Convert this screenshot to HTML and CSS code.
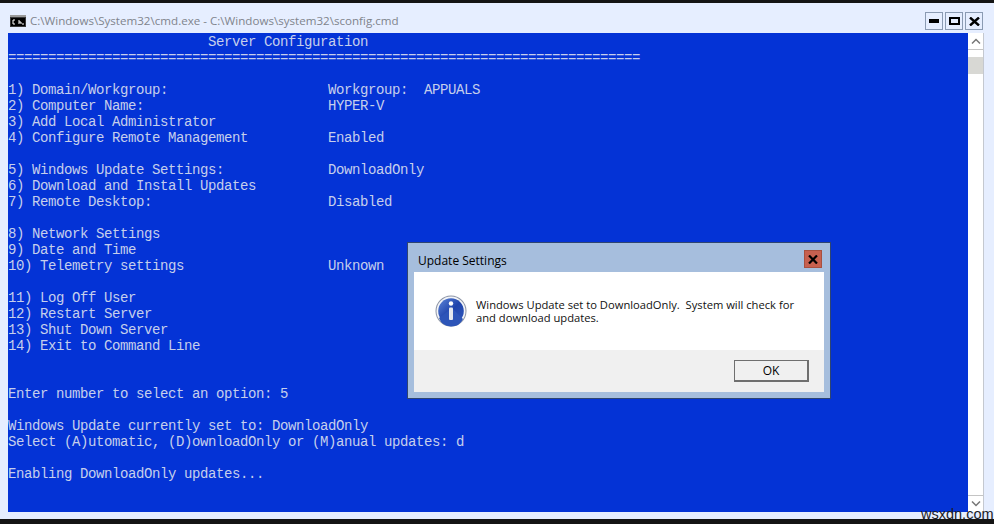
FILE: index.html
```html
<!DOCTYPE html>
<html lang="en">
<head>
<meta charset="utf-8">
<title>cmd.exe - sconfig</title>
<link rel="stylesheet" href="styles.css">
</head>
<body>
<div class="window">
  <header class="titlebar">
    <svg class="app-icon" width="16" height="12" viewBox="0 0 16 12">
      <rect width="16" height="12" fill="#3a3a3a"/>
      <rect x="0" y="0" width="16" height="2" fill="#9a9a9a"/>
      <rect x="1" y="3" width="14" height="8" fill="#000"/>
      <path d="M5 5H3v4h2M7 6v0M7 8v0M9 5v4M9 7h2v2M12 9h2" fill="none" stroke="#fff" stroke-width="1"/>
    </svg>
    <span class="title">C:\Windows\System32\cmd.exe - C:\Windows\system32\sconfig.cmd</span>
    <div class="controls">
      <div class="ctl"><svg width="10" height="4" viewBox="0 0 10 4"><rect width="10" height="4" fill="#000"/></svg></div>
      <div class="ctl"><svg width="11" height="8" viewBox="0 0 11 8"><rect x="1" y="1" width="9" height="6" fill="none" stroke="#000" stroke-width="2"/></svg></div>
      <div class="ctl"><svg width="11" height="9" viewBox="0 0 11 9"><path d="M1 .5l9 8M10 .5l-9 8" stroke="#000" stroke-width="2.4" fill="none"/></svg></div>
    </div>
  </header>
  <div class="body">
<pre class="console">                         Server Configuration
===============================================================================

1) Domain/Workgroup:                    Workgroup:  APPUALS
2) Computer Name:                       HYPER-V
3) Add Local Administrator
4) Configure Remote Management          Enabled

5) Windows Update Settings:             DownloadOnly
6) Download and Install Updates
7) Remote Desktop:                      Disabled

8) Network Settings
9) Date and Time
10) Telemetry settings                  Unknown

11) Log Off User
12) Restart Server
13) Shut Down Server
14) Exit to Command Line


Enter number to select an option: 5

Windows Update currently set to: DownloadOnly
Select (A)utomatic, (D)ownloadOnly or (M)anual updates: d

Enabling DownloadOnly updates...</pre>
    <div class="scrollbar">
      <div class="sb-btn"><svg width="10" height="6" viewBox="0 0 10 6"><path d="M1 5.5l4-4 4 4" fill="none" stroke="#777" stroke-width="1.5"/></svg></div>
      <div class="sb-thumb"></div>
      <div class="sb-btn sb-end"><svg width="10" height="6" viewBox="0 0 10 6"><path d="M1 .5l4 4 4-4" fill="none" stroke="#777" stroke-width="1.5"/></svg></div>
    </div>
  </div>
</div>

<section class="dialog">
  <div class="dlg-title">
    <span>Update Settings</span>
    <div class="dlg-close"><svg width="10" height="9" viewBox="0 0 10 9"><path d="M1 .5l8 8M9 .5l-8 8" stroke="#000" stroke-width="2.2" fill="none"/></svg></div>
  </div>
  <div class="dlg-client">
    <div class="dlg-msg">
      <svg class="info" width="32" height="32" viewBox="0 0 32 32">
        <defs>
          <linearGradient id="g" x1="0" y1="0" x2="1" y2="1">
            <stop offset="0" stop-color="#5f86d8"/>
            <stop offset="0.5" stop-color="#1f44ac"/>
            <stop offset="1" stop-color="#3058bc"/>
          </linearGradient>
        </defs>
        <circle cx="16" cy="16" r="15.5" fill="#8d95a6"/>
        <circle cx="16" cy="16" r="14.5" fill="#f2f4f8"/>
        <circle cx="16" cy="16" r="12.8" fill="url(#g)"/>
        <path d="M4 23L17 13l11 11a13 13 0 0 1-24-1z" fill="#2d55b8"/>
        <circle cx="16" cy="8.5" r="2.2" fill="#fff"/>
        <rect x="14" y="12.5" width="4" height="12.5" rx="1" fill="#e4e8ee"/>
      </svg>
      <p class="dlg-text">Windows Update set to DownloadOnly.&nbsp; System will check for<br>and download updates.</p>
    </div>
    <div class="dlg-footer">
      <button class="ok" type="button">OK</button>
    </div>
  </div>
</section>

<div class="watermark">wsxdn.com</div>
</body>
</html>
```
FILE: styles.css
```css
* { box-sizing: border-box; }
html, body { margin: 0; padding: 0; height: 524px; overflow: hidden; }
body { background: #141414; position: relative; }

.window {
  margin-top: 3px;
  height: 516px;
  background: #e6eeff;
  padding: 0 10px 7px 8px;
  display: flex;
  flex-direction: column;
}
.titlebar {
  height: 30px;
  flex: none;
  display: flex;
  align-items: center;
  margin-right: 1px;
  padding: 0 0 0 2px;
}
.app-icon { flex: none; margin-top: 6px; }
.title {
  font: 11.6px/16px "Open Sans", sans-serif;
  color: #80848c;
  margin-left: 4px;
  margin-top: 6px;
  white-space: nowrap;
}
.controls { margin-left: auto; display: flex; gap: 2px; margin-top: 6px; }
.ctl {
  width: 18px;
  height: 18px;
  border: 1px solid #8b9bb3;
  display: flex;
  align-items: center;
  justify-content: center;
}
.body { flex: 1; display: flex; min-height: 0; }
.console {
  flex: 1;
  margin: 0;
  padding-top: 1px;
  background: #0433d6;
  color: #c6cfec;
  font: 14px/16px "Liberation Mono", monospace;
  letter-spacing: -0.4px;
  overflow: hidden;
}
.scrollbar {
  width: 16px;
  flex: none;
  background: #fff;
  display: flex;
  flex-direction: column;
  border-right: 1px solid #c4c8d0;
}
.sb-btn {
  height: 17px;
  display: flex;
  align-items: center;
  justify-content: center;
  border-bottom: 1px solid #c4c4c4;
}
.sb-end { border-bottom: 0; border-top: 1px solid #c4c4c4; margin-top: auto; }
.sb-thumb { height: 17px; margin-top: 7px; background: #d8d8d4; }

.dialog {
  position: absolute;
  left: 407px;
  top: 242px;
  width: 424px;
  height: 157px;
  background: #a6bedd;
  border: 1px solid #2f4570;
  padding: 0 6px 6px;
  display: flex;
  flex-direction: column;
}
.dlg-title {
  height: 29px;
  flex: none;
  display: flex;
  align-items: center;
  justify-content: space-between;
  font: 12px/16px "Open Sans", sans-serif;
  color: #000;
  padding: 7px 2px 0 4px;
}
.dlg-close {
  width: 18px;
  height: 18px;
  margin-top: -4px;
  background: #c7604f;
  border: 1px solid #a8503f;
  display: flex;
  align-items: center;
  justify-content: center;
}
.dlg-client { flex: 1; display: flex; flex-direction: column; background: #fff; }
.dlg-msg { height: 78px; flex: none; display: flex; padding: 23px 0 0 21px; }
.info { flex: none; }
.dlg-text {
  margin: 3px 0 0 9px;
  font: 11.2px/13px "Open Sans", sans-serif;
  color: #111;
  white-space: nowrap;
}
.dlg-footer {
  flex: 1;
  background: #f0f0f0;
  display: flex;
  justify-content: flex-end;
  padding: 10px 15px 0 0;
}
.ok {
  width: 75px;
  height: 22px;
  padding: 0;
  background: #f0f0f0;
  border: 2px solid #6f6f6f;
  border-top-width: 1px;
  border-left-width: 1px;
  font: 12px/16px "Open Sans", sans-serif;
  color: #000;
}
.watermark {
  position: absolute;
  left: 921px;
  top: 506px;
  font: 14.5px/16px "Liberation Sans", sans-serif;
  color: #1c1c28;
}
```
